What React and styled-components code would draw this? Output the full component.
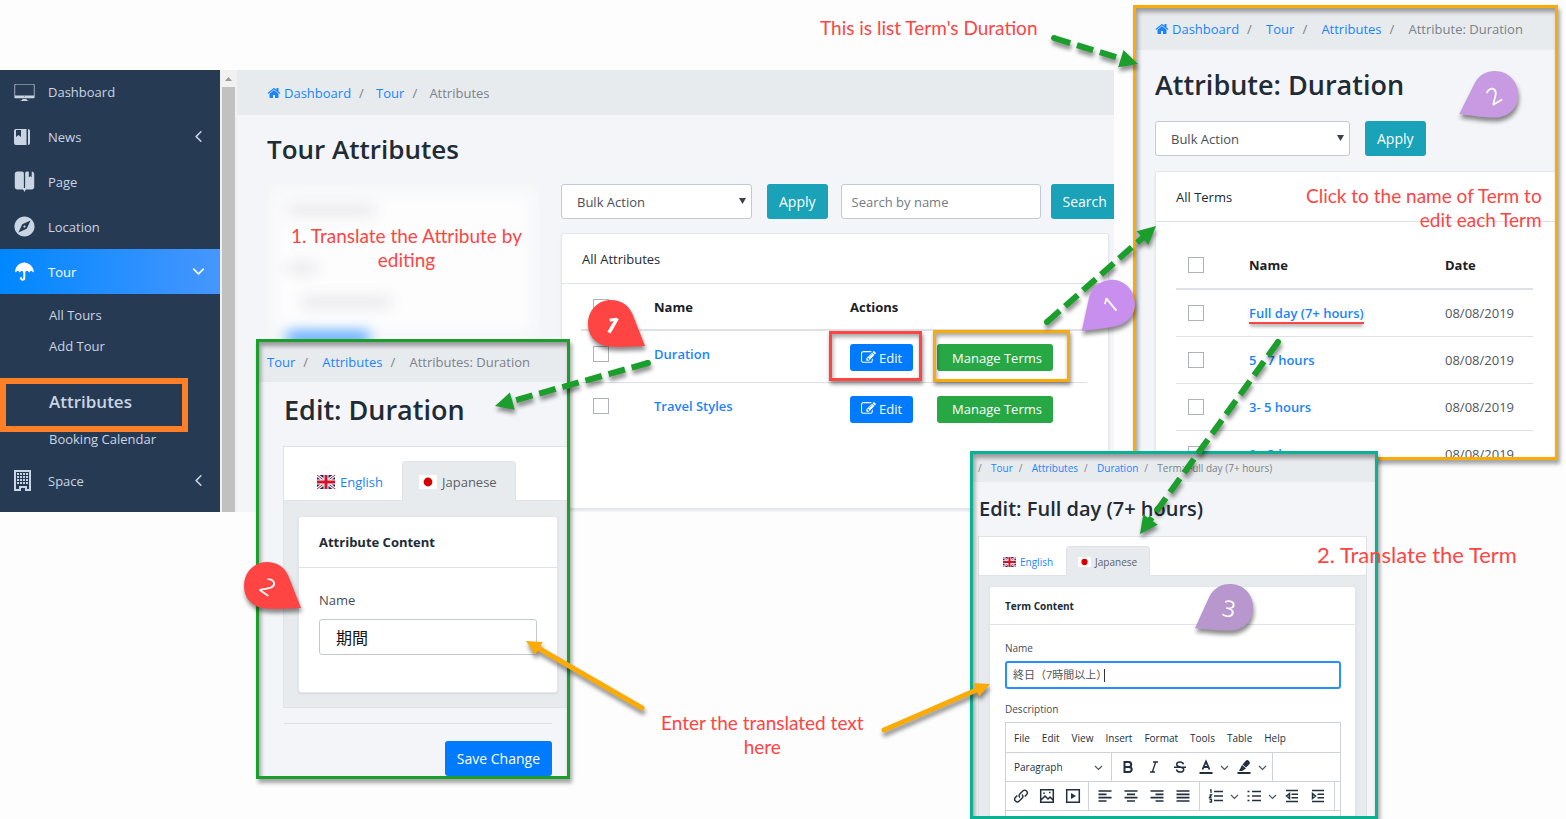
import React from 'react';
import styled, { createGlobalStyle, css } from 'styled-components';
import {
  IoIosDesktop, IoIosBookmarks, IoMdCompass, IoMdUmbrella,
  IoIosArrowBack, IoIosArrowDown,
} from 'react-icons/io';

const GlobalStyle = createGlobalStyle`
  *, *::before, *::after { box-sizing: border-box; }
  body {
    margin: 0;
    background: #fdfdfd;
    color: #212b36;
    font-family: 'Open Sans', 'Noto Sans', 'Noto Sans CJK JP', sans-serif;
    font-size: 13px;
    line-height: 20px;
  }
  button, input, select { font: inherit; margin: 0; }
  a { color: #1a84ff; text-decoration: none; }
  ul, ol { list-style: none; margin: 0; padding: 0; }
  h1, h2, p { margin: 0; }
`;

const Canvas = styled.div`
  position: relative;
  min-height: 100vh;
  overflow: hidden;
`;

/* ---------- floating windows ---------- */

const Screen = styled.section`
  position: absolute;
  top: 70px;
  left: 0;
  width: 1114px;
  height: 442px;
  display: flex;
  overflow: hidden;
  background: #f4f5f8;
`;

const Window = styled.section`
  position: absolute;
  top: ${(p) => p.$y}px;
  left: ${(p) => p.$x}px;
  width: ${(p) => p.$w}px;
  height: ${(p) => p.$h}px;
  border: 3px solid ${(p) => p.$color};
  background: #f4f5f8;
  overflow: hidden;
  box-shadow: 2px 4px 4px rgba(0, 0, 0, 0.35);
  font-size: ${(p) => (p.$small ? 10 : 13)}px;
  &::after {
    content: '';
    position: absolute;
    inset: 0;
    pointer-events: none;
    box-shadow: inset 2px 4px 4px rgba(0, 0, 0, 0.35);
  }
`;

/* ---------- sidebar ---------- */

const Sidebar = styled.nav`
  flex: 0 0 220px;
  background: #273a53;
  a { color: #c9d5e3; }
`;

const MenuLink = styled.a`
  display: flex;
  align-items: center;
  height: 45px;
  padding: 0 13px;
  &:first-child { height: 44px; }
  ${(p) => p.$active && css`
    background: linear-gradient(90deg, #0087ff, #4796ff);
    && { color: #fff; }
  `}
  span { flex: 1; }
`;

const MenuIcon = styled.i`
  display: flex;
  width: 35px;
  svg { width: 23px; height: 23px; }
`;

const SubMenu = styled.ul`
  padding: 6px 0 3px;
`;

const SubItem = styled.li`
  height: 31px;
  line-height: 31px;
  padding-left: 49px;
`;

const MarkedItem = styled.li`
  position: relative;
  z-index: 1;
  width: 188px;
  height: 54px;
  margin: 16px 0 -8px;
  padding-left: 43px;
  border: 6px solid #ff7f27;
  background: #273a53;
  font-size: 17px;
  font-weight: 600;
  line-height: 36px;
`;

const ScrollTrack = styled.div`
  flex: 0 0 17px;
  padding: 0 2px;
  background: #f1f1f1;
  svg { display: block; height: 17px; width: 13px; }
`;

const ScrollThumb = styled.div`
  height: 100%;
  background: #c1c1c1;
`;

/* ---------- shared pieces ---------- */

const Crumbs = styled.ol`
  display: flex;
  align-items: center;
  height: ${(p) => p.$h}px;
  padding: 0 0 0 ${(p) => p.$pad}px;
  background: #e8ebee;
  color: #7a828a;
  white-space: nowrap;
  svg { width: 14px; height: 14px; vertical-align: -2px; margin-right: 3px; }
  li + li::before, li.lead::before {
    content: '/';
    display: inline-block;
    width: ${(p) => p.$sep || 17}px;
    color: #7a828a;
  }
  li + li { margin-left: ${(p) => (p.$small ? 6 : 8)}px; }
`;

const Title = styled.h1`
  font-size: ${(p) => p.$size}px;
  line-height: 34px;
  font-weight: 600;
  color: #212b36;
  white-space: nowrap;
`;

const Button = styled.button`
  flex: none;
  height: ${(p) => (p.$compact ? 27 : 35)}px;
  padding: 0 ${(p) => (p.$compact ? 11 : 12)}px;
  border: 0;
  border-radius: 3px;
  background: ${(p) => p.$color};
  color: #fff;
  font-size: ${(p) => (p.$compact ? 13 : 14)}px;
  white-space: nowrap;
  svg { width: 15px; height: 15px; vertical-align: -2px; margin-right: 3px; }
`;

const ManageButton = styled(Button)`
  padding-left: 15px;
`;

const Toolbar = styled.div`
  display: flex;
`;

const SelectBox = styled.div`
  position: relative;
  flex: none;
  width: ${(p) => p.$w}px;
  margin-right: 15px;
  select {
    appearance: none;
    width: 100%;
    height: 35px;
    padding: 0 15px;
    border: 1px solid #c2cad6;
    border-radius: 3px;
    background: #fff;
    color: #495057;
  }
  svg { position: absolute; right: 6px; top: 13px; width: 7px; height: 8px; }
`;

const TextInput = styled.input`
  width: ${(p) => p.$w}px;
  height: ${(p) => p.$h || 35}px;
  padding: 0 ${(p) => p.$pad || 10}px;
  flex: none;
  border: 1px solid #c2cad6;
  border-radius: 3px;
  background: #fff;
  color: #111;
  font-size: ${(p) => p.$fs || 13}px;
  &::placeholder { color: #727b84; opacity: 1; }
`;

const SearchInput = styled(TextInput)`
  margin: 0 10px 0 13px;
`;

const Card = styled.div`
  border: 1px solid #e3e6ea;
  border-radius: 3px;
  background: #fff;
  box-shadow: 0 1px 2px rgba(0, 0, 0, 0.08);
`;

const CardHead = styled.div`
  height: ${(p) => p.$h}px;
  padding: 0 ${(p) => p.$pad}px;
  line-height: ${(p) => p.$h}px;
  border-bottom: 1px solid #dfe2e6;
  font-weight: ${(p) => (p.$bold ? 700 : 400)};
`;

const Table = styled.table`
  width: 100%;
  table-layout: fixed;
  border-collapse: collapse;
  th, td {
    height: ${(p) => p.$row}px;
    padding: 0 0 0 12px;
    text-align: left;
    border-top: 1px solid #dee2e6;
    white-space: nowrap;
  }
  th { border-top: 0; border-bottom: 2px solid #dee2e6; height: ${(p) => p.$head}px; color: #1b2026; }
  td { color: #50575e; vertical-align: top; padding-top: 13px; }
  td a { font-weight: 600; }
`;

const Check = styled.input`
  appearance: none;
  display: block;
  width: 16px;
  height: 16px;
  && { margin: 2px 0; }
  border: 1px solid #aeb3b8;
  background: #fff;
`;

const Underlined = styled.a`
  border-bottom: 2px solid #ff4444;
  box-shadow: 0 4px 3px -1px rgba(0, 0, 0, 0.25);
`;

const Actions = styled.div`
  display: flex;
  gap: 24px;
`;

/* ---------- attributes screen ---------- */

const Main = styled.main`
  flex: 1;
  min-width: 0;
`;

const MainBody = styled.div`
  padding: 17px 5px 0 30px;
`;

const Columns = styled.div`
  display: flex;
  gap: 21px;
  margin-top: 18px;
`;

const ListColumn = styled.div`
  flex: 1;
  min-width: 0;
`;

const HiddenForm = styled.div`
  flex: 0 0 273px;
  height: 156px;
  padding: 20px 20px 0;
  background: #fdfdfe;
  box-shadow: inset 0 0 16px 8px #f5f6f8;
  overflow: hidden;
`;

const Smudge = styled.div`
  width: ${(p) => p.$w}px;
  height: 12px;
  margin: 0 0 ${(p) => p.$gap}px ${(p) => p.$in || 0}px;
  background: ${(p) => p.$color || '#e9e9eb'};
  filter: blur(7px);
`;

const ListCard = styled(Card)`
  height: 276px;
  margin-top: 14px;
  overflow: hidden;
`;

const TableBody = styled.div`
  padding: ${(p) => p.$pad};
`;

/* ---------- edit windows ---------- */

const WindowHead = styled.div`
  padding: ${(p) => p.$pad};
`;

const TermCard = styled(Card)`
  margin: 15px -4px 0 19px;
`;

const TabCard = styled.div`
  margin-left: ${(p) => p.$left}px;
  margin-right: ${(p) => p.$right}px;
  border: 1px solid #dfe3e7;
  background: #e8ebee;
`;

const InnerCard = styled(Card)`
  margin: ${(p) => (p.$small ? '10px 10px 0' : '15px 9px 14px 14px')};
`;

const Tabs = styled.div`
  display: flex;
  align-items: flex-end;
  height: ${(p) => (p.$small ? 39 : 54)}px;
  padding-left: ${(p) => (p.$small ? 12 : 16)}px;
  background: #fff;
  border-bottom: 1px solid #dfe3e7;
`;

const Tab = styled.button`
  display: flex;
  align-items: center;
  gap: ${(p) => (p.$small ? 4 : 5)}px;
  height: ${(p) => (p.$small ? 30 : 40)}px;
  margin-bottom: -1px;
  padding: 0 ${(p) => (p.$small ? 12 : 18)}px 0 ${(p) => (p.$small ? 11 : 16)}px;
  border: 1px solid ${(p) => (p.$on ? '#dfe3e7' : 'transparent')};
  border-bottom: 0;
  border-radius: 4px 4px 0 0;
  background: ${(p) => (p.$on ? '#e8ebee' : 'transparent')};
  color: ${(p) => (p.$on ? '#5a6268' : '#1a84ff')};
  svg { flex: none; width: ${(p) => (p.$small ? 13 : 18)}px; height: ${(p) => (p.$small ? 10 : 14)}px; }
`;

const FormBody = styled.div`
  padding: ${(p) => (p.$small ? '13px 14px 0 15px' : '22px 20px 37px')};
  label { display: block; line-height: 20px; margin-bottom: ${(p) => (p.$small ? 3 : 9)}px; color: #454d54; }
`;

const Footer = styled.div`
  margin: 15px 15px 0 25px;
  padding-top: 17px;
  border-top: 1px solid #dcdfe3;
  display: flex;
  justify-content: flex-end;
`;

const FocusField = styled.div`
  display: flex;
  align-items: center;
  height: 28px;
  margin-bottom: 10px;
  padding-left: 6px;
  border: 2px solid #2790ff;
  border-radius: 3px;
  background: #fff;
  input { width: 91px; border: 0; padding: 0; outline: 0; background: none; color: #555; font-size: 11px; }
  i { width: 1px; height: 13px; background: #333; }
`;

const Editor = styled.div`
  border: 1px solid #cfd2d6;
  min-height: 120px;
`;

const EditorRow = styled.div`
  display: flex;
  align-items: center;
  height: ${(p) => p.$h || 29}px;
  padding-left: ${(p) => p.$pad || 0}px;
  gap: ${(p) => p.$gap || 0}px;
  border-bottom: 1px solid #cfd2d6;
  button { border: 0; padding: 0; background: none; color: #222f3e; }
`;

const ToolGroup = styled.div`
  display: flex;
  align-items: center;
  height: 100%;
  padding: 0 ${(p) => p.$pad}px;
  gap: ${(p) => p.$gap}px;
  border-right: 1px solid #cfd2d6;
  svg { display: block; }
`;

const ParagraphButton = styled.button`
  display: flex;
  align-items: center;
  justify-content: space-between;
  width: 89px;
`;

const Split = styled.span`
  display: flex;
  align-items: center;
  gap: 6px;
  margin-right: -3px;
`;

/* ---------- annotations ---------- */

const Note = styled.p`
  position: absolute;
  left: ${(p) => p.$x}px;
  top: ${(p) => p.$y}px;
  color: #ff4444;
  font-family: Lato, 'Open Sans', sans-serif;
  font-size: ${(p) => (p.$large ? 22 : 19)}px;
  line-height: 24px;
  text-align: ${(p) => p.$align || 'center'};
  white-space: nowrap;
`;

const Frame = styled.div`
  position: absolute;
  left: ${(p) => p.$x}px;
  top: ${(p) => p.$y}px;
  width: ${(p) => p.$w}px;
  height: ${(p) => p.$h}px;
  border: 3px solid ${(p) => p.$color};
  box-shadow: 1px 3px 4px rgba(0, 0, 0, 0.45), inset 1px 3px 4px rgba(0, 0, 0, 0.35);
  pointer-events: none;
`;

const Drawing = styled.svg`
  position: absolute;
  top: 0;
  left: 0;
  pointer-events: none;
  g.lift { filter: drop-shadow(1px 4px 2px rgba(0, 0, 0, 0.45)); }
  text { font-family: 'Open Sans', sans-serif; font-size: 23px; fill: #fff; text-anchor: middle; }
`;

/* ---------- icons ---------- */

const HomeIcon = () => (
  <svg viewBox="0 0 1792 1792" fill="currentColor" aria-hidden="true">
    <path d="M1472 992v480q0 26-19 45t-45 19h-384v-384h-256v384h-384q-26 0-45-19t-19-45v-480q0-1 .5-3t.5-3l575-474 575 474q1 2 1 6zm223-69l-62 74q-8 9-21 11h-3q-13 0-21-7l-692-577-692 577q-12 8-24 7-13-2-21-11l-62-74q-8-10-7-23.5t11-21.5l719-599q32-26 76-26t76 26l244 204v-195q0-14 9-23t23-9h192q14 0 23 9t9 23v408l219 182q10 8 11 21.5t-7 23.5z" />
  </svg>
);

const EditIcon = () => (
  <svg viewBox="0 0 1792 1792" fill="currentColor" aria-hidden="true">
    <path d="M888 1184l116-116-152-152-116 116v56h96v96h56zm440-720q-16-16-33 1l-350 350q-17 17-1 33t33-1l350-350q17-17 1-33zm80 594v190q0 119-84.5 203.5t-203.5 84.5h-832q-119 0-203.5-84.5t-84.5-203.5v-832q0-119 84.500-203.500t203.500-84.500h832q63 0 117 25 15 7 18 23 3 17-9 29l-49 49q-14 14-32 8-23-6-45-6h-832q-66 0-113 47t-47 113v832q0 66 47 113t113 47h832q66 0 113-47t47-113v-126q0-13 9-22l64-64q15-15 35-7t20 29zm-96-738l288 288-672 672h-288v-288zm444 132l-92 92-288-288 92-92q28-28 68-28t68 28l152 152q28 28 28 68t-28 68z" />
  </svg>
);

const JournalIcon = () => (
  <svg viewBox="0 0 23 23" fill="none" aria-hidden="true">
    <path d="M3 4h10v16H3a2 2 0 01-2-2V6a2 2 0 012-2z" fill="#c9d5e3" />
    <path d="M12 4h1.500v16H12z" fill="#c9d5e3" />
    <path d="M15 4a2 2 0 012 2v12a2 2 0 01-2 2z" fill="#c9d5e3" />
    <path d="M3 5h5v7L5.500 10 3 12z" fill="#273a53" />
  </svg>
);

const BuildingIcon = () => (
  <svg viewBox="0 0 23 23" fill="none" aria-hidden="true">
    <path d="M2 2h15v19h-4v-3H7v3H2z" stroke="#c9d5e3" strokeWidth="2" />
    {[4, 7, 10, 13].map((y) => [4, 7, 10, 13].map((x) => (
      <rect key={`${x}-${y}`} x={x} y={y} width="2" height="2" fill="#c9d5e3" />
    )))}
  </svg>
);

const FlagUK = () => (
  <svg viewBox="0 0 18 14" aria-hidden="true">
    <rect width="18" height="14" fill="#13296b" />
    <path d="M0 0l18 14M18 0L0 14" stroke="#fff" strokeWidth="3" />
    <path d="M0 0l18 14M18 0L0 14" stroke="#d3122c" strokeWidth="1" />
    <path d="M9 0v14M0 7h18" stroke="#fff" strokeWidth="5" />
    <path d="M9 0v14M0 7h18" stroke="#d3122c" strokeWidth="3" />
  </svg>
);

const FlagJapan = () => (
  <svg viewBox="0 0 18 14" aria-hidden="true">
    <rect width="18" height="14" fill="#fff" />
    <circle cx="9" cy="7" r="4.4" fill="#d60000" />
  </svg>
);

const Triangle = () => (
  <svg viewBox="0 0 7 8" aria-hidden="true"><path d="M0 1h7L3.500 7z" fill="#3c4248" /></svg>
);

const Chevron = () => (
  <svg width="9" height="9" viewBox="0 0 9 9" fill="none" stroke="#4b5663" strokeWidth="1.2" aria-hidden="true">
    <path d="M1 3l3.500 3.500L8 3" />
  </svg>
);

const toolPaths = {
  bold: <path d="M4.500 3h4.200a2.300 2.300 0 010 5H4.500zM4.500 8h4.700a2.500 2.500 0 010 5H4.500z" strokeWidth="2" />,
  italic: <path d="M7 3h5M4 13h5M9.700 3L6.300 13" strokeWidth="1.300" />,
  strike: <path d="M2 8.200h12M11.500 5.300C11 3.600 9.800 3 8 3 5.900 3 4.700 4 4.700 5.400c0 3.500 7 1.800 7 5 0 1.500-1.400 2.600-3.500 2.600s-3.400-.8-3.800-2.500" strokeWidth="1.500" />,
  color: <path d="M4.500 10.500L8 2.500l3.500 8M5.600 8h4.800M1.500 14h13" strokeWidth="1.800" />,
  marker: (
    <>
      <path d="M1.500 14h13" strokeWidth="2" />
      <path d="M3 12l3-6 4 3.500L6 12zM6.500 5.500L10 1.500q1.500-1 3 .5t.5 3L10 8.500z" fill="#222f3e" stroke="none" />
    </>
  ),
  link: <path d="M7 9.500a2.700 2.700 0 010-3.800L9.800 3a2.600 2.600 0 013.700 3.700L11.700 8.500M9 6.500a2.700 2.700 0 010 3.800L6.200 13a2.600 2.600 0 01-3.700-3.700l1.800-1.800" strokeWidth="1.400" />,
  image: <path d="M1.700 1.700h12.600v12.600H1.700zM2 12l4-4 3 3 2-2 3 3M5 4.500v1.500M10 4.500h1.500" strokeWidth="1.500" />,
  media: (
    <>
      <path d="M1.700 1.700h12.600v12.600H1.700z" strokeWidth="1.500" />
      <path d="M6 5l5 3-5 3z" fill="#222f3e" stroke="none" />
    </>
  ),
  left: <path d="M1.500 3h13M1.500 6.300h8M1.500 9.600h13M1.500 13h8" strokeWidth="1.700" />,
  center: <path d="M1.500 3h13M4 6.300h8M1.500 9.600h13M4 13h8" strokeWidth="1.700" />,
  right: <path d="M1.500 3h13M6.500 6.300h8M1.500 9.600h13M6.500 13h8" strokeWidth="1.700" />,
  justify: <path d="M1.500 3h13M1.500 6.300h13M1.500 9.600h13M1.500 13h13" strokeWidth="1.700" />,
  numbers: <path d="M6 3.500h9M6 8h9M6 12.500h9M2 2h1v3M1.500 7h2l-2 2.500h2M1.500 11.500h2v2.500h-2" strokeWidth="1.300" />,
  bullets: <path d="M6 3.500h9M6 8h9M6 12.500h9M1.500 3.500h2M1.500 8h2M1.500 12.500h2" strokeWidth="1.600" />,
  outdent: <path d="M2 2.500h12M7.500 6.200h6.500M7.500 9.800h6.500M2 13.500h12M5.500 5.500L2.500 8l3 2.500z" strokeWidth="1.500" />,
  indent: <path d="M2 2.500h12M7.500 6.200h6.500M7.500 9.800h6.500M2 13.500h12M2.500 5.500l3 2.500-3 2.500z" strokeWidth="1.500" />,
};

const Tool = ({ name }) => (
  <button type="button" aria-label={name}>
    <svg width="16" height="16" viewBox="0 0 16 16" fill="none" stroke="#222f3e">{toolPaths[name]}</svg>
  </button>
);

const MenuChevron = ({ label }) => <button type="button" aria-label={label}><Chevron /></button>;

/* ---------- screens ---------- */

const menuTop = [
  { label: 'Dashboard', icon: <IoIosDesktop /> },
  { label: 'News', icon: <JournalIcon />, arrow: <IoIosArrowBack size={17} /> },
  { label: 'Page', icon: <IoIosBookmarks /> },
  { label: 'Location', icon: <IoMdCompass /> },
  { label: 'Tour', icon: <IoMdUmbrella />, arrow: <IoIosArrowDown size={17} />, active: true },
];

function BulkSelect({ width }) {
  return (
    <SelectBox $w={width}>
      <select aria-label="Bulk Action"><option>Bulk Action</option></select>
      <Triangle />
    </SelectBox>
  );
}

function SideMenu() {
  return (
    <Sidebar>
      {menuTop.map((m) => (
        <MenuLink key={m.label} href="#" $active={m.active}>
          <MenuIcon>{m.icon}</MenuIcon>
          <span>{m.label}</span>
          {m.arrow}
        </MenuLink>
      ))}
      <SubMenu>
        <SubItem><a href="#">All Tours</a></SubItem>
        <SubItem><a href="#">Add Tour</a></SubItem>
        <MarkedItem><a href="#">Attributes</a></MarkedItem>
        <SubItem><a href="#">Booking Calendar</a></SubItem>
      </SubMenu>
      <MenuLink href="#">
        <MenuIcon><BuildingIcon /></MenuIcon>
        <span>Space</span>
        <IoIosArrowBack size={17} />
      </MenuLink>
    </Sidebar>
  );
}

function AttributesScreen() {
  return (
    <Screen>
      <SideMenu />
      <ScrollTrack>
        <svg viewBox="0 0 13 17" aria-hidden="true"><path d="M3 11h7L6.500 7z" fill="#9a9a9a" /></svg>
        <ScrollThumb />
      </ScrollTrack>
      <Main>
        <Crumbs $h={45} $pad={30}>
          <li><a href="#"><HomeIcon />Dashboard</a></li>
          <li><a href="#">Tour</a></li>
          <li>Attributes</li>
        </Crumbs>
        <MainBody>
          <Title $size={26}>Tour Attributes</Title>
          <Columns>
            <HiddenForm aria-hidden="true">
              <Smudge $w={88} $gap={46} />
              <Smudge $w={30} $gap={22} />
              <Smudge $w={90} $gap={24} $in={14} />
              <Smudge $w={82} $gap={0} $color="#3d9bff" />
            </HiddenForm>
            <ListColumn>
              <Toolbar>
                <BulkSelect width={191} />
                <Button type="button" $color="#19a2b8">Apply</Button>
                <SearchInput $w={200} placeholder="Search by name" aria-label="Search by name" />
                <Button type="button" $color="#19a2b8">Search</Button>
              </Toolbar>
              <ListCard>
                <CardHead $h={50} $pad={20}>All Attributes</CardHead>
                <TableBody $pad="0 21px 0 19px">
                  <Table $row={52} $head={46}>
                    <colgroup><col width="61" /><col width="196" /><col /></colgroup>
                    <thead>
                      <tr>
                        <th><Check type="checkbox" aria-label="Select all attributes" /></th>
                        <th>Name</th>
                        <th>Actions</th>
                      </tr>
                    </thead>
                    <tbody>
                      {['Duration', 'Travel Styles'].map((name) => (
                        <tr key={name}>
                          <td><Check type="checkbox" aria-label={name} /></td>
                          <td><a href="#">{name}</a></td>
                          <td>
                            <Actions>
                              <Button type="button" $compact $color="#007bff"><EditIcon />Edit</Button>
                              <ManageButton type="button" $compact $color="#28a745">Manage Terms</ManageButton>
                            </Actions>
                          </td>
                        </tr>
                      ))}
                    </tbody>
                  </Table>
                </TableBody>
              </ListCard>
            </ListColumn>
          </Columns>
        </MainBody>
      </Main>
    </Screen>
  );
}

const terms = ['Full day (7+ hours)', '5 - 7 hours', '3- 5 hours', '0 - 3 hours'];

function TermsWindow() {
  return (
    <Window $x={1133} $y={5} $w={425} $h={455} $color="#faab07">
      <Crumbs $h={42} $pad={19} $sep={19}>
        <li><a href="#"><HomeIcon />Dashboard</a></li>
        <li><a href="#">Tour</a></li>
        <li><a href="#">Attributes</a></li>
        <li>Attribute: Duration</li>
      </Crumbs>
      <WindowHead $pad="18px 0 19px 19px"><Title $size={27}>Attribute: Duration</Title></WindowHead>
      <WindowHead $pad="0 0 0 19px">
        <Toolbar>
          <BulkSelect width={195} />
          <Button type="button" $color="#19a2b8">Apply</Button>
        </Toolbar>
      </WindowHead>
      <TermCard>
        <CardHead $h={50} $pad={20}>All Terms</CardHead>
        <TableBody $pad="20px 25px 0 20px">
          <Table $row={47} $head={47}>
            <colgroup><col width="61" /><col width="196" /><col /></colgroup>
            <thead>
              <tr>
                <th><Check type="checkbox" aria-label="Select all terms" /></th>
                <th>Name</th>
                <th>Date</th>
              </tr>
            </thead>
            <tbody>
              {terms.map((t, i) => (
                <tr key={t}>
                  <td><Check type="checkbox" aria-label={t} /></td>
                  <td>{i === 0 ? <Underlined href="#">{t}</Underlined> : <a href="#">{t}</a>}</td>
                  <td>08/08/2019</td>
                </tr>
              ))}
            </tbody>
          </Table>
        </TableBody>
      </TermCard>
    </Window>
  );
}

function LanguageTabs({ small }) {
  return (
    <Tabs $small={small} role="tablist">
      <Tab $small={small} type="button" role="tab"><FlagUK />English</Tab>
      <Tab $small={small} $on type="button" role="tab" aria-selected="true"><FlagJapan />Japanese</Tab>
    </Tabs>
  );
}

function EditAttributeWindow() {
  return (
    <Window $x={256} $y={339} $w={314} $h={440} $color="#1b9e2c">
      <Crumbs $h={40} $pad={8} $sep={19}>
        <li><a href="#">Tour</a></li>
        <li><a href="#">Attributes</a></li>
        <li>Attributes: Duration</li>
      </Crumbs>
      <WindowHead $pad="11px 0 19px 25px"><Title $size={27}>Edit: Duration</Title></WindowHead>
      <TabCard $left={24} $right={-1}>
        <LanguageTabs />
        <InnerCard>
          <CardHead $h={51} $pad={20} $bold>Attribute Content</CardHead>
          <FormBody>
            <label htmlFor="attribute-name">Name</label>
            <TextInput id="attribute-name" $w={218} $h={36} $pad={16} $fs={16} defaultValue="期間" />
          </FormBody>
        </InnerCard>
      </TabCard>
      <Footer><Button type="button" $color="#007bff">Save Change</Button></Footer>
    </Window>
  );
}

function EditTermWindow() {
  return (
    <Window $x={970} $y={451} $w={408} $h={368} $color="#0cb092" $small>
      <Crumbs $h={28} $pad={5} $sep={13} $small>
        <li className="lead"><a href="#">Tour</a></li>
        <li><a href="#">Attributes</a></li>
        <li><a href="#">Duration</a></li>
        <li>Term: Full day (7+ hours)</li>
      </Crumbs>
      <WindowHead $pad="10px 0 10px 6px"><Title $size={20}>Edit: Full day (7+ hours)</Title></WindowHead>
      <TabCard $left={5} $right={8}>
        <LanguageTabs small />
        <InnerCard $small>
          <CardHead $h={38} $pad={15} $bold>Term Content</CardHead>
          <FormBody $small>
            <label htmlFor="term-name">Name</label>
            <FocusField><input id="term-name" defaultValue="終日（7時間以上）" /><i /></FocusField>
            <label id="description-label">Description</label>
            <Editor aria-labelledby="description-label">
              <EditorRow $h={30} $pad={8} $gap={12}>
                {['File', 'Edit', 'View', 'Insert', 'Format', 'Tools', 'Table', 'Help'].map((m) => (
                  <button key={m} type="button">{m}</button>
                ))}
              </EditorRow>
              <EditorRow>
                <ToolGroup $pad={8}>
                  <ParagraphButton type="button">Paragraph <Chevron /></ParagraphButton>
                </ToolGroup>
                <ToolGroup $pad={8} $gap={10}>
                  <Tool name="bold" /><Tool name="italic" /><Tool name="strike" />
                  <Split><Tool name="color" /><MenuChevron label="Text colour" /></Split>
                  <Split><Tool name="marker" /><MenuChevron label="Highlight colour" /></Split>
                </ToolGroup>
              </EditorRow>
              <EditorRow>
                <ToolGroup $pad={7} $gap={10}>
                  <Tool name="link" /><Tool name="image" /><Tool name="media" />
                </ToolGroup>
                <ToolGroup $pad={8} $gap={10}>
                  <Tool name="left" /><Tool name="center" /><Tool name="right" /><Tool name="justify" />
                </ToolGroup>
                <ToolGroup $pad={8} $gap={10}>
                  <Split><Tool name="numbers" /><MenuChevron label="Numbered list styles" /></Split>
                  <Split><Tool name="bullets" /><MenuChevron label="Bullet list styles" /></Split>
                  <Tool name="outdent" /><Tool name="indent" />
                </ToolGroup>
              </EditorRow>
            </Editor>
          </FormBody>
        </InnerCard>
      </TabCard>
    </Window>
  );
}

/* ---------- arrows and numbered pins ---------- */

function Arrow({ from, to, color, dashed, head = 18 }) {
  const dx = to[0] - from[0];
  const dy = to[1] - from[1];
  const length = Math.hypot(dx, dy);
  const angle = (Math.atan2(dy, dx) * 180) / Math.PI;
  return (
    <g className="lift">
      <g transform={`translate(${from[0]} ${from[1]}) rotate(${angle})`}>
        <circle r={dashed ? 3 : 2.5} fill={color} />
        <path
          d={`M0 0H${length - head + 2}`} stroke={color} strokeWidth={dashed ? 6 : 5}
          strokeDasharray={dashed ? '17 7' : undefined}
        />
        <path d={`M${length} 0l${-head} ${-head / 2}v${head}z`} fill={color} />
      </g>
    </g>
  );
}

function Pin({ x, y, color, flip, tilt = 0, digit, turn, bold }) {
  return (
    <g className="lift">
      <g transform={`translate(${x} ${y})`}>
        <path
          transform={`rotate(${tilt})${flip ? ' scale(-1 1)' : ''}`}
          d="M33 21C22 21 8 23-6 21-18 18-24 10-24-1-24-15-14-25-1-25 9-25 16-20 20-12z"
          fill={color}
        />
        <text transform={`rotate(${turn})`} y="8" fontWeight={bold ? 700 : 400}>{digit}</text>
      </g>
    </g>
  );
}

export default function App() {
  return (
    <>
      <GlobalStyle />
      <Canvas>
        <AttributesScreen />
        <TermsWindow />
        <EditAttributeWindow />
        <EditTermWindow />

        <Frame $x={829} $y={331} $w={93} $h={50} $color="#ff4444" />
        <Frame $x={933} $y={330} $w={137} $h={52} $color="#faab07" />

        <Drawing width="1566" height="819" viewBox="0 0 1566 819">
          <Arrow from={[1054, 38]} to={[1138, 64]} color="#1b9e2c" dashed />
          <Arrow from={[1047, 322]} to={[1156, 226]} color="#1b9e2c" dashed />
          <Arrow from={[648, 363]} to={[495, 406]} color="#1b9e2c" dashed />
          <Arrow from={[1278, 342]} to={[1140, 534]} color="#1b9e2c" dashed />
          <Arrow from={[642, 708]} to={[526, 641]} color="#faab07" head={15} />
          <Arrow from={[884, 730]} to={[990, 684]} color="#faab07" head={15} />
          <Pin x={612} y={325} color="#ff4444" digit="1" turn={30} bold />
          <Pin x={268} y={587} color="#ff4444" digit="2" turn={35} />
          <Pin x={1111} y={305} color="#c88fee" digit="1" turn={-40} flip tilt={-9} />
          <Pin x={1494} y={96} color="#c79ae2" digit="2" turn={-30} flip tilt={5} />
          <Pin x={1229} y={609} color="#b896ce" digit="3" turn={10} flip tilt={3} />
        </Drawing>

        <Note $x={820} $y={16}>This is list Term's Duration</Note>
        <Note $x={291} $y={224}>1. Translate the Attribute by<br />editing</Note>
        <Note $x={1306} $y={184} $align="right">Click to the name of Term to<br />edit each Term</Note>
        <Note $x={1317} $y={543} $large>2. Translate the Term</Note>
        <Note $x={661} $y={711}>Enter the translated text<br />here</Note>
      </Canvas>
    </>
  );
}
